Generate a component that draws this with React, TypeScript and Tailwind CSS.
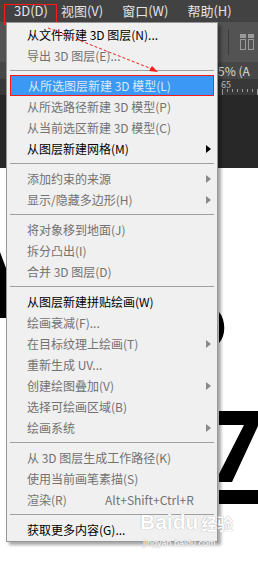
import { Fragment } from "react";

type MenuEntry =
  | { kind: "sep" }
  | { kind: "item"; label: string; dim?: boolean; sub?: boolean; active?: boolean; shortcut?: string };

const FONT = { fontFamily: '"Noto Sans CJK SC", "Noto Sans", sans-serif' };

const MENU: MenuEntry[] = [
  { kind: "item", label: "从文件新建 3D 图层(N)..." },
  { kind: "item", label: "导出 3D 图层(E)...", dim: true },
  { kind: "sep" },
  { kind: "item", label: "从所选图层新建 3D 模型(L)", active: true },
  { kind: "item", label: "从所选路径新建 3D 模型(P)", dim: true },
  { kind: "item", label: "从当前选区新建 3D 模型(C)", dim: true },
  { kind: "item", label: "从图层新建网格(M)", sub: true },
  { kind: "sep" },
  { kind: "item", label: "添加约束的来源", dim: true, sub: true },
  { kind: "item", label: "显示/隐藏多边形(H)", dim: true, sub: true },
  { kind: "sep" },
  { kind: "item", label: "将对象移到地面(J)", dim: true },
  { kind: "item", label: "拆分凸出(I)", dim: true },
  { kind: "item", label: "合并 3D 图层(D)", dim: true },
  { kind: "sep" },
  { kind: "item", label: "从图层新建拼贴绘画(W)" },
  { kind: "item", label: "绘画衰减(F)...", dim: true },
  { kind: "item", label: "在目标纹理上绘画(T)", dim: true, sub: true },
  { kind: "item", label: "重新生成 UV...", dim: true },
  { kind: "item", label: "创建绘图叠加(V)", dim: true, sub: true },
  { kind: "item", label: "选择可绘画区域(B)", dim: true },
  { kind: "item", label: "绘画系统", dim: true, sub: true },
  { kind: "sep" },
  { kind: "item", label: "从 3D 图层生成工作路径(K)", dim: true },
  { kind: "item", label: "使用当前画笔素描(S)", dim: true },
  { kind: "item", label: "渲染(R)", dim: true, shortcut: "Alt+Shift+Ctrl+R" },
  { kind: "sep" },
  { kind: "item", label: "获取更多内容(G)..." },
];

function Arrow({ dark }: { dark: boolean }) {
  return (
    <svg width="5" height="8" viewBox="0 0 5 8" className="absolute left-[199px] top-[7px]">
      <path d="M0 0 L5 4 L0 8 Z" fill={dark ? "#000" : "#8a8a8a"} />
    </svg>
  );
}

function MenuRow({ entry }: { entry: Extract<MenuEntry, { kind: "item" }> }) {
  if (entry.active) {
    return (
      <div className="relative mx-[3px] h-[21px] border border-[#ff1a1a] bg-[#3b99f5]">
        <span className="absolute left-[17px] top-[1px] text-[12px] leading-[18px] text-[#dce8f5]">{entry.label}</span>
      </div>
    );
  }
  return (
    <div className={`relative h-[21px] ${entry.dim ? "text-[#727272]" : "text-black"}`}>
      <span className="absolute left-[20px] top-[1px] whitespace-nowrap text-[12px] leading-[19px]">{entry.label}</span>
      {entry.shortcut ? (
        <span className="absolute left-[98px] top-[1px] whitespace-nowrap text-[12px] leading-[19px]">{entry.shortcut}</span>
      ) : null}
      {entry.sub ? <Arrow dark={!entry.dim} /> : null}
    </div>
  );
}

export default function App() {
  return (
    <div className="relative h-[567px] w-[258px] overflow-hidden bg-white" style={FONT}>
      {/* app chrome behind the menu */}
      <div className="flex h-[22px] items-center bg-[#424242] text-[13px] text-[#e4e4e4]">
        <span className="ml-[14px]">3D(D)</span>
        <span className="ml-[13px]">视图(V)</span>
        <span className="ml-[19px]">窗口(W)</span>
        <span className="ml-[19px]">帮助(H)</span>
      </div>
      <div className="flex h-[40px] items-center justify-end bg-[#535353] pr-[4px]">
        <div className="mr-[11px] h-[26px] w-px bg-[#3a3a3a]" />
        <div className="flex gap-[2px]">
          <div className="flex flex-col gap-[1px]">
            <div className="h-[4px] w-[6px] bg-[#9a9a9a]" />
            <div className="h-[11px] w-[6px] border border-[#9a9a9a]" />
          </div>
          <div className="flex flex-col gap-[1px]">
            <div className="h-[4px] w-[6px] bg-[#9a9a9a]" />
            <div className="h-[11px] w-[6px] border border-[#9a9a9a]" />
          </div>
        </div>
      </div>
      <div className="flex h-[17px] items-center overflow-hidden bg-[#474747] pl-[218px] text-[12px] leading-[15px] text-[#dcdcdc]">5% (A</div>
      <div className="relative h-[16px] bg-[#383838] pl-[221px] text-[9px] leading-[12px] text-[#bdbdbd]">
        65
        <div className="absolute bottom-0 left-[222px] flex gap-[4px]">
          {[6, 3, 3, 3, 3, 3, 3, 6].map((h, i) => (
            <div key={i} className="w-px bg-[#9a9a9a]" style={{ height: h }} />
          ))}
        </div>
      </div>
      <div className="h-[73px] bg-[#282828]" />

      {/* large glyphs on the canvas */}
      <svg className="absolute left-0 top-0" width="258" height="567">
        <path d="M0 252 L6 268 L6 318 L0 318 Z" fill="#000" />
        <path d="M219 312 C226 320 226 336 219 343 Z" fill="#000" />
        <path d="M219 411 L258 411 L258 426 L232 482 L219 482 L219 474 L244 425 L219 425 Z" fill="#000" />
        <rect x="219" y="490" width="39" height="14" fill="#000" />
      </svg>

      {/* red box around the active menu title */}
      <div className="absolute left-[4px] top-[4px] h-[21px] w-[53px] border border-[#ff1a1a]" />

      {/* dropdown */}
      <div className="absolute left-[6px] top-[22px] w-[212px] border border-[#979797] bg-[#f0f0f0] py-[1px] shadow-[3px_3px_3px_rgba(0,0,0,0.35)]">
        {MENU.map((entry, i) => (
          <Fragment key={i}>
            {entry.kind === "sep" ? (
              <div className="flex h-[9px] items-center px-[3px]">
                <div className="h-px w-full bg-[#a0a0a0]" />
              </div>
            ) : (
              <MenuRow entry={entry} />
            )}
          </Fragment>
        ))}
      </div>

      {/* watermark */}
      <div
        className="absolute left-[140px] top-[510px] flex items-end text-white [text-shadow:0_0_1px_#8a8a8a]"
        style={{ fontFamily: '"Liberation Sans", sans-serif' }}
      >
        <span className="text-[21px] font-bold leading-[24px]">Baidu</span>
        <span className="ml-[3px] text-[16px] font-bold leading-[22px]" style={FONT}>经验</span>
      </div>
      <div
        className="absolute left-[143px] top-[537px] text-[9px] text-white [text-shadow:0_0_1px_#9a9a9a]"
        style={{ fontFamily: '"Liberation Sans", sans-serif' }}
      >
        jingyan.baidu.com
      </div>

      {/* dashed red pointer */}
      <svg className="absolute left-0 top-0" width="258" height="120">
        <line x1="48" y1="28" x2="152" y2="69" stroke="#ff1a1a" strokeWidth="1" strokeDasharray="3 2" />
        <path d="M158 72 L149 71 L152 66 Z" fill="#ff1a1a" />
      </svg>
    </div>
  );
}
